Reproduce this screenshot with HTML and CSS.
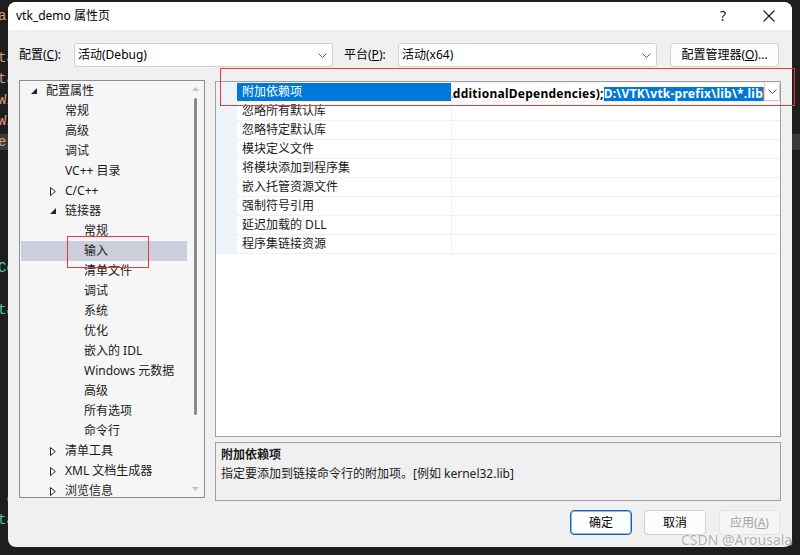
FILE: index.html
```html
<!DOCTYPE html>
<html lang="zh-CN">
<head>
<meta charset="utf-8">
<title>vtk_demo 属性页</title>
<link rel="stylesheet" href="styles.css">
</head>
<body>
<div class="editor">
  <div class="ln str">a</div>
  <div class="ln str">&nbsp;l</div>
  <div class="ln str">ta</div>
  <div class="ln str">ta</div>
  <div class="ln str">Wi</div>
  <div class="ln str">Wi</div>
  <div class="ln str cur">er</div>
  <div class="ln"></div>
  <div class="ln"></div>
  <div class="ln"></div>
  <div class="ln"></div>
  <div class="ln"></div>
  <div class="ln type">Co</div>
  <div class="ln"></div>
  <div class="ln type">ta</div>
  <div class="ln"></div>
  <div class="ln"></div>
  <div class="ln"></div>
  <div class="ln"></div>
  <div class="ln"></div>
  <div class="ln"></div>
  <div class="ln"></div>
  <div class="ln"></div>
  <div class="ln cmt">&nbsp;c</div>
  <div class="ln type">ta</div>
</div>

<div class="dialog">
  <div class="titlebar">
    <span class="title">vtk_demo 属性页</span>
    <span class="tb-btn help">?</span>
    <span class="tb-btn close">
      <svg width="12" height="12" viewBox="0 0 12 12"><path d="M0.5 0.5 L11.5 11.5 M11.5 0.5 L0.5 11.5" stroke="#1b1b1b" stroke-width="1.1" fill="none"/></svg>
    </span>
  </div>

  <div class="config-row">
    <span class="cfg-label">配置(<u>C</u>):</span>
    <div class="combo">
      <span>活动(Debug)</span>
      <svg class="chev" width="9" height="5" viewBox="0 0 9 5"><polyline points="0.5,0.5 4.5,4.5 8.5,0.5" fill="none" stroke="#5a5a5a" stroke-width="1"/></svg>
    </div>
    <span class="cfg-label plat">平台(<u>P</u>):</span>
    <div class="combo">
      <span>活动(x64)</span>
      <svg class="chev" width="9" height="5" viewBox="0 0 9 5"><polyline points="0.5,0.5 4.5,4.5 8.5,0.5" fill="none" stroke="#5a5a5a" stroke-width="1"/></svg>
    </div>
    <button class="btn mgr">配置管理器(<u>O</u>)...</button>
  </div>

  <div class="main">
    <div class="tree">
      <div class="tree-rows">
        <div class="node l0"><span class="exp"><svg width="6" height="6" viewBox="0 0 6 6"><polygon points="6,0 6,6 0,6" fill="#262626"/></svg></span>配置属性</div>
        <div class="node l1 leaf">常规</div>
        <div class="node l1 leaf">高级</div>
        <div class="node l1 leaf">调试</div>
        <div class="node l1 leaf">VC++ 目录</div>
        <div class="node l1"><span class="exp"><svg width="6" height="9" viewBox="0 0 6 9"><polygon points="0.5,0.5 5.3,4.5 0.5,8.5" fill="none" stroke="#262626" stroke-width="1"/></svg></span>C/C++</div>
        <div class="node l1"><span class="exp"><svg width="6" height="6" viewBox="0 0 6 6"><polygon points="6,0 6,6 0,6" fill="#262626"/></svg></span>链接器</div>
        <div class="node l2 leaf">常规</div>
        <div class="node l2 leaf sel">输入</div>
        <div class="node l2 leaf">清单文件</div>
        <div class="node l2 leaf">调试</div>
        <div class="node l2 leaf">系统</div>
        <div class="node l2 leaf">优化</div>
        <div class="node l2 leaf">嵌入的 IDL</div>
        <div class="node l2 leaf">Windows 元数据</div>
        <div class="node l2 leaf">高级</div>
        <div class="node l2 leaf">所有选项</div>
        <div class="node l2 leaf">命令行</div>
        <div class="node l1"><span class="exp"><svg width="6" height="9" viewBox="0 0 6 9"><polygon points="0.5,0.5 5.3,4.5 0.5,8.5" fill="none" stroke="#262626" stroke-width="1"/></svg></span>清单工具</div>
        <div class="node l1"><span class="exp"><svg width="6" height="9" viewBox="0 0 6 9"><polygon points="0.5,0.5 5.3,4.5 0.5,8.5" fill="none" stroke="#262626" stroke-width="1"/></svg></span>XML 文档生成器</div>
        <div class="node l1"><span class="exp"><svg width="6" height="9" viewBox="0 0 6 9"><polygon points="0.5,0.5 5.3,4.5 0.5,8.5" fill="none" stroke="#262626" stroke-width="1"/></svg></span>浏览信息</div>
      </div>
      <div class="vscroll">
        <svg class="arr up" width="7" height="4" viewBox="0 0 7 4"><polygon points="3.5,0 7,4 0,4" fill="#c4c4c4"/></svg>
        <span class="thumb"></span>
        <svg class="arr down" width="7" height="4" viewBox="0 0 7 4"><polygon points="0,0 7,0 3.5,4" fill="#c4c4c4"/></svg>
      </div>
    </div>

    <div class="right">
      <div class="grid">
        <div class="prow">
          <span class="gut"></span>
          <span class="pname sel">附加依赖项</span>
          <span class="pval">
            <span class="edit">
              <span class="txt">$(AdditionalDependencies);</span><span class="txt hl">D:\VTK\vtk-prefix\lib\*.lib</span><span class="caret"></span>
            </span>
            <span class="dd">
              <svg width="9" height="5" viewBox="0 0 9 5"><polyline points="0.5,0.5 4.5,4.5 8.5,0.5" fill="none" stroke="#5a5a5a" stroke-width="1"/></svg>
            </span>
          </span>
        </div>
        <div class="prow"><span class="gut"></span><span class="pname">忽略所有默认库</span><span class="pval"></span></div>
        <div class="prow"><span class="gut"></span><span class="pname">忽略特定默认库</span><span class="pval"></span></div>
        <div class="prow"><span class="gut"></span><span class="pname">模块定义文件</span><span class="pval"></span></div>
        <div class="prow"><span class="gut"></span><span class="pname">将模块添加到程序集</span><span class="pval"></span></div>
        <div class="prow"><span class="gut"></span><span class="pname">嵌入托管资源文件</span><span class="pval"></span></div>
        <div class="prow"><span class="gut"></span><span class="pname">强制符号引用</span><span class="pval"></span></div>
        <div class="prow"><span class="gut"></span><span class="pname">延迟加载的 DLL</span><span class="pval"></span></div>
        <div class="prow last"><span class="gut"></span><span class="pname">程序集链接资源</span><span class="pval"></span></div>
      </div>
      <div class="desc">
        <div class="desc-title">附加依赖项</div>
        <div class="desc-text">指定要添加到链接命令行的附加项。[例如 kernel32.lib]</div>
      </div>
    </div>
  </div>

  <div class="footer">
    <button class="btn ok">确定</button>
    <button class="btn cancel">取消</button>
    <button class="btn apply" disabled>应用(<u>A</u>)</button>
  </div>
</div>

<div class="mark mark-grid"></div>
<div class="mark mark-node"></div>
<div class="watermark">CSDN @Arousala</div>
</body>
</html>
```

FILE: styles.css
```css
* { box-sizing: border-box; }

html, body { margin: 0; padding: 0; }

body {
  width: 800px;
  height: 555px;
  overflow: hidden;
  position: relative;
  background: #1e1e1e;
  font-family: "Noto Sans", "Noto Sans CJK SC", sans-serif;
  font-size: 12px;
  color: #000;
}

/* code editor behind the dialog */
.editor {
  height: 555px;
  overflow: hidden;
  padding-top: 6px;
  font-family: "Liberation Mono", monospace;
  font-size: 14px;
  line-height: 21px;
}
.ln { height: 21px; margin-left: -2px; white-space: pre; }
.ln.str { color: #d69d85; }
.ln.type { color: #4ec9b0; }
.ln.cmt { color: #57a64a; }
.ln.cur { background: #3a3a3a; height: 16px; line-height: 16px; margin-top: 2px; margin-bottom: 3px; }

/* dialog window */
.dialog {
  position: absolute;
  left: 8px;
  top: 2px;
  width: 784px;
  height: 545px;
  background: #f0f0f0;
  border-radius: 8px;
  overflow: hidden;
  display: flex;
  flex-direction: column;
}

.titlebar {
  flex: none;
  height: 28px;
  background: #fff;
  display: flex;
  align-items: center;
  padding-left: 8px;
  line-height: 16px;
}
.title { flex: 1; color: #000; }
.tb-btn {
  width: 46px;
  height: 28px;
  display: flex;
  align-items: center;
  justify-content: center;
}
.help { font-size: 14px; color: #1b1b1b; }

/* configuration / platform row */
.config-row {
  flex: none;
  display: flex;
  align-items: center;
  height: 24px;
  margin-top: 13px;
  padding-left: 11px;
  line-height: 16px;
}
.cfg-label { width: 55px; flex: none; }
.cfg-label.plat { margin-left: 11px; width: 54px; }
.combo {
  flex: none;
  width: 259px;
  height: 24px;
  background: #fff;
  border: 1px solid #cfcfcf;
  border-radius: 3px;
  display: flex;
  align-items: center;
  justify-content: space-between;
  padding: 0 5px 0 3px;
}
.chev { display: block; }

.btn {
  font-family: inherit;
  font-size: 12px;
  line-height: 16px;
  color: #000;
  background: #fdfdfd;
  border: 1px solid #d0d0d0;
  border-radius: 4px;
  padding: 0;
  height: 25px;
}
.btn u { text-decoration: underline; }
.mgr {
  flex: none;
  margin-left: 13px;
  width: 109px;
  height: 24px;
}

/* tree + property grid */
.main {
  flex: none;
  display: flex;
  align-items: flex-start;
  gap: 10px;
  margin-top: 13px;
  padding-left: 11px;
}

.tree {
  flex: none;
  width: 186px;
  height: 418px;
  border: 1px solid #8e8e8e;
  background: #f6f6f6;
  display: flex;
  overflow: hidden;
}
.tree-rows {
  flex: 1;
  overflow: hidden;
  padding-left: 1px;
}
.node {
  height: 20px;
  line-height: 20px;
  white-space: nowrap;
  display: flex;
  align-items: center;
  color: #1a1a1a;
}
.node.l0 { padding-left: 10px; }
.node.l1 { padding-left: 29px; }
.node.l2 { padding-left: 48px; }
.node.l1.leaf { padding-left: 44px; }
.node.l2.leaf { padding-left: 63px; }
.node.sel { background: #cccedb; }
.exp {
  width: 15px;
  flex: none;
  display: flex;
  align-items: center;
}
.exp svg { display: block; }

.vscroll {
  flex: none;
  width: 17px;
  display: flex;
  flex-direction: column;
  align-items: center;
}
.arr { display: block; flex: none; }
.arr.up { margin-top: 6px; }
.thumb {
  display: block;
  margin-top: 7px;
  width: 3px;
  height: 317px;
  border-radius: 2px;
  background: #8a8a8a;
}
.arr.down { margin-top: 72px; }

.right {
  flex: none;
  width: 566px;
  display: flex;
  flex-direction: column;
}

.grid {
  margin-top: 1px;
  height: 356px;
  border: 1px solid #a0a0a0;
  background: #fff;
}
.prow {
  display: grid;
  grid-template-columns: 21px 214px 1fr;
  height: 19px;
}
.gut { background: #eef3fa; }
.pname, .pval {
  border-top: 1px solid #f0f0f0;
  line-height: 18px;
  white-space: nowrap;
}
.pname { padding-left: 5px; color: #1a1a1a; }
.pval { border-left: 1px solid #f0f0f0; display: flex; min-width: 0; }
.prow.last { height: 20px; }
.prow.last .pname, .prow.last .pval { border-bottom: 1px solid #f0f0f0; }
.pname.sel { background: #0078d7; background-clip: padding-box; color: #fff; }

.edit {
  flex: 1;
  min-width: 0;
  overflow: hidden;
  display: flex;
  justify-content: flex-end;
  align-items: flex-end;
  background: #fff;
}
.txt {
  flex: none;
  font-weight: bold;
  line-height: 14px;
  height: 14px;
  color: #000;
  letter-spacing: 0.25px;
}
.txt.hl { background: #0078d7; color: #fff; }
.caret {
  flex: none;
  width: 1px;
  height: 14px;
  background: #e07a1f;
}
.dd {
  flex: none;
  width: 16px;
  background: #fff;
  border: 1px solid #cdcdcd;
  border-top: none;
  display: flex;
  align-items: center;
  justify-content: center;
}
.dd svg { display: block; }

.desc {
  margin-top: 5px;
  height: 59px;
  border: 1px solid #a0a0a0;
  background: #f0f0f0;
  padding: 2px 5px;
  line-height: 19px;
  color: #1a1a1a;
}
.desc-title { font-weight: bold; }

/* dialog buttons */
.footer {
  flex: none;
  display: flex;
  justify-content: flex-end;
  margin-top: 9px;
  padding-right: 12px;
}
.ok {
  width: 62px;
  margin-right: 12px;
  border-color: #0a64b8;
  box-shadow: inset 0 0 0 1px rgba(10, 100, 184, 0.45);
}
.cancel { width: 62px; margin-right: 13px; }
.apply {
  width: 61px;
  background: #f5f5f5;
  border-color: #e5e5e5;
  color: #a3a3a3;
}

/* red annotation frames */
.mark {
  position: absolute;
  border: 1px solid #e8383d;
}
.mark-grid { left: 220px; top: 68px; width: 575px; height: 38px; }
.mark-node { left: 67px; top: 236px; width: 82px; height: 32px; }

.watermark {
  position: absolute;
  left: 681px;
  top: 531px;
  font-size: 14px;
  line-height: 18px;
  color: #b0b0b0;
  text-shadow: 0 0 1px #fff, 0 0 2px #fff;
  white-space: nowrap;
}
```
